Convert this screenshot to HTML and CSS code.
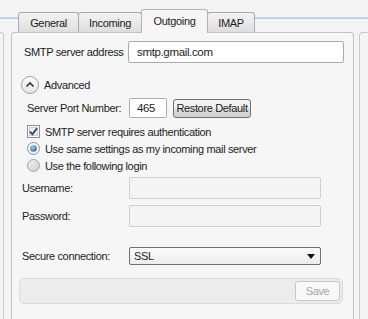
FILE: index.html
```html
<!DOCTYPE html>
<html lang="en">

<head>
  <meta charset="UTF-8">
  <meta name="viewport" content="width=device-width, initial-scale=1.0">
  <title>Mail settings</title>
  <link rel="stylesheet" href="styles.css">
</head>

<body>
  <div class="tabbar">
    <div class="tab">General</div>
    <div class="tab">Incoming</div>
    <div class="tab active">Outgoing</div>
    <div class="tab">IMAP</div>
  </div>

  <div class="stage">
    <div class="peek-left"></div>

    <div class="panel">
      <div class="row server">
        <label>SMTP server address</label>
        <div class="input">smtp.gmail.com</div>
      </div>

      <div class="row advanced">
        <span class="round-btn">
          <svg width="18" height="18" viewBox="0 0 18 18">
            <path d="M5.5 10.5 L9 7 L12.5 10.5" fill="none" stroke="#333" stroke-width="1.6" />
          </svg>
        </span>
        <span>Advanced</span>
      </div>

      <div class="row port">
        <label>Server Port Number:</label>
        <div class="input small">465</div>
        <button class="btn">Restore Default</button>
      </div>

      <div class="row option first">
        <svg class="mark" width="13" height="13" viewBox="0 0 13 13">
          <rect x="0.5" y="0.5" width="12" height="12" fill="#fdfdfd" stroke="#8e8f8f" />
          <rect x="2.5" y="2.5" width="8" height="8" fill="#eef0f4" stroke="#c9ccd2" />
          <path d="M3 6.5 L5.4 9.3 L10 3.2" fill="none" stroke="#2c3a8c" stroke-width="1.8" />
        </svg>
        <span>SMTP server requires authentication</span>
      </div>

      <div class="row option">
        <svg class="mark" width="13" height="13" viewBox="0 0 13 13">
          <defs>
            <radialGradient id="dot" cx="0.4" cy="0.35" r="0.7">
              <stop offset="0" stop-color="#9bd3f5" />
              <stop offset="1" stop-color="#1a6aa8" />
            </radialGradient>
          </defs>
          <circle cx="6.5" cy="6.5" r="6" fill="#f4f4f4" stroke="#8e8f8f" />
          <circle cx="6.5" cy="6.5" r="3.3" fill="url(#dot)" />
        </svg>
        <span>Use same settings as my incoming mail server</span>
      </div>

      <div class="row option">
        <svg class="mark" width="13" height="13" viewBox="0 0 13 13">
          <defs>
            <linearGradient id="off" x1="0" y1="0" x2="1" y2="1">
              <stop offset="0" stop-color="#f0f0f0" />
              <stop offset="1" stop-color="#cfcfcf" />
            </linearGradient>
          </defs>
          <circle cx="6.5" cy="6.5" r="6" fill="url(#off)" stroke="#a3a3a3" />
        </svg>
        <span>Use the following login</span>
      </div>

      <div class="form">
        <label>Username:</label>
        <div class="input off"></div>
        <label>Password:</label>
        <div class="input off"></div>
        <label class="secure">Secure connection:</label>
        <div class="select secure">
          <span>SSL</span>
          <svg width="8" height="5" viewBox="0 0 8 5"><path d="M0 0 H8 L4 5 Z" fill="#111" /></svg>
        </div>
      </div>

      <div class="savebar">
        <button class="save">Save</button>
      </div>
    </div>

    <div class="peek-right"></div>
  </div>
</body>

</html>
```

FILE: styles.css
```css
* {
  margin: 0;
  padding: 0;
  box-sizing: border-box;
  font-family: "Liberation Sans", Arial, sans-serif;
}

body {
  width: 368px;
  height: 319px;
  overflow: hidden;
  background: #f4f4f4;
  color: #1c1c1c;
  font-size: 11px;
  letter-spacing: -0.35px;
}

.tabbar {
  display: flex;
  align-items: flex-end;
  height: 33px;
  padding-left: 18px;
  margin-bottom: -1px;
  position: relative;
  z-index: 1;
  background: linear-gradient(to bottom, transparent 17px, #d6e2f2 17px, #b8cce8 18px, #b8cce8 19px, transparent 19px);
}

.tab {
  height: 20px;
  padding: 0 12px;
  display: flex;
  align-items: center;
  justify-content: center;
  border: 1px solid #a9a9a9;
  border-bottom: 0;
  border-radius: 3px 3px 0 0;
  background: linear-gradient(#f3f3f3, #dedede);
  margin-bottom: 1px;
}

.tab+.tab {
  margin-left: -1px;
}

.tab:nth-child(1) {
  width: 61px;
}

.tab:nth-child(2) {
  width: 64px;
}

.tab:nth-child(4) {
  width: 48px;
}

.tab.active {
  width: 67px;
  height: 24px;
  margin-bottom: 0;
  padding-bottom: 2px;
  background: #f6f6f6;
  border-color: #b4b4b4;
  position: relative;
  z-index: 2;
}

.stage {
  display: flex;
  height: 287px;
}

.peek-left {
  width: 4px;
  border: 1px solid #c8c8c8;
  border-left: 0;
  border-bottom: 0;
  border-radius: 0 4px 0 0;
}

.peek-right {
  flex: 1;
  margin-left: 5px;
  border: 1px solid #c8c8c8;
  border-right: 0;
  border-bottom: 0;
  border-radius: 4px 0 0 0;
}

.panel {
  width: 343px;
  margin-left: 7px;
  border: 1px solid #c2c2c2;
  border-bottom: 0;
  border-radius: 4px 4px 0 0;
  background: #f6f6f6;
  padding: 8px 9px 0 10px;
}

.row {
  display: flex;
  align-items: center;
}

.input {
  height: 22px;
  background: #fff;
  border: 1px solid #ababab;
  border-radius: 2px;
  padding: 0 8px;
  display: flex;
  align-items: center;
  font-size: 11.5px;
}

.server label {
  width: 104px;
  margin-left: 2px;
}

.server .input {
  flex: 1;
}

.advanced {
  height: 18px;
  margin-top: 13px;
  margin-left: -1px;
}

.round-btn {
  width: 18px;
  height: 18px;
  border-radius: 50%;
  border: 1px solid #a0a0a0;
  background: linear-gradient(#ffffff, #e4e4e4);
  display: flex;
  align-items: center;
  justify-content: center;
  margin-right: 5px;
}

.round-btn svg {
  margin: -1px;
}

.port {
  height: 20px;
  margin-top: 4px;
  padding-left: 5px;
}

.port label {
  width: 102px;
}

.input.small {
  width: 38px;
  height: 20px;
  padding: 0 7px;
}

.btn {
  margin-left: 6px;
  width: 78px;
  height: 19px;
  border: 1px solid #707070;
  border-radius: 3px;
  background: linear-gradient(#f2f2f2 45%, #dddddd 55%, #d2d2d2);
  font-size: 11px;
  letter-spacing: -0.35px;
  color: #1c1c1c;
}

.option {
  height: 17px;
  padding-left: 5px;
}

.option.first {
  margin-top: 5px;
}

.mark {
  margin-right: 5px;
  flex: none;
}

.form {
  display: grid;
  grid-template-columns: 107px 192px;
  row-gap: 6px;
  align-items: center;
  margin-top: 3px;
}

.form .input {
  margin-top: 0;
}

.input.off {
  background: #f4f4f4;
  border-color: #cfcfcf;
}

.secure {
  margin-top: 14px;
}

.select {
  height: 18px;
  border: 1px solid #6f6f6f;
  border-radius: 2px;
  background: linear-gradient(#fbfbfb, #ececec);
  display: flex;
  align-items: center;
  justify-content: space-between;
  padding: 0 5px 0 4px;
}

.savebar {
  margin-top: 13px;
  width: 324px;
  margin-left: -3px;
  height: 26px;
  background: #ececec;
  border: 1px solid #dcdcdc;
  border-radius: 5px;
  display: flex;
  justify-content: flex-end;
  align-items: center;
  padding-right: 2px;
}

.save {
  width: 45px;
  height: 20px;
  border: 1px solid #c6c6c6;
  border-radius: 3px;
  background: #f8f8f8;
  color: #a6a6a6;
  font-size: 11px;
  letter-spacing: -0.35px;
}
```
